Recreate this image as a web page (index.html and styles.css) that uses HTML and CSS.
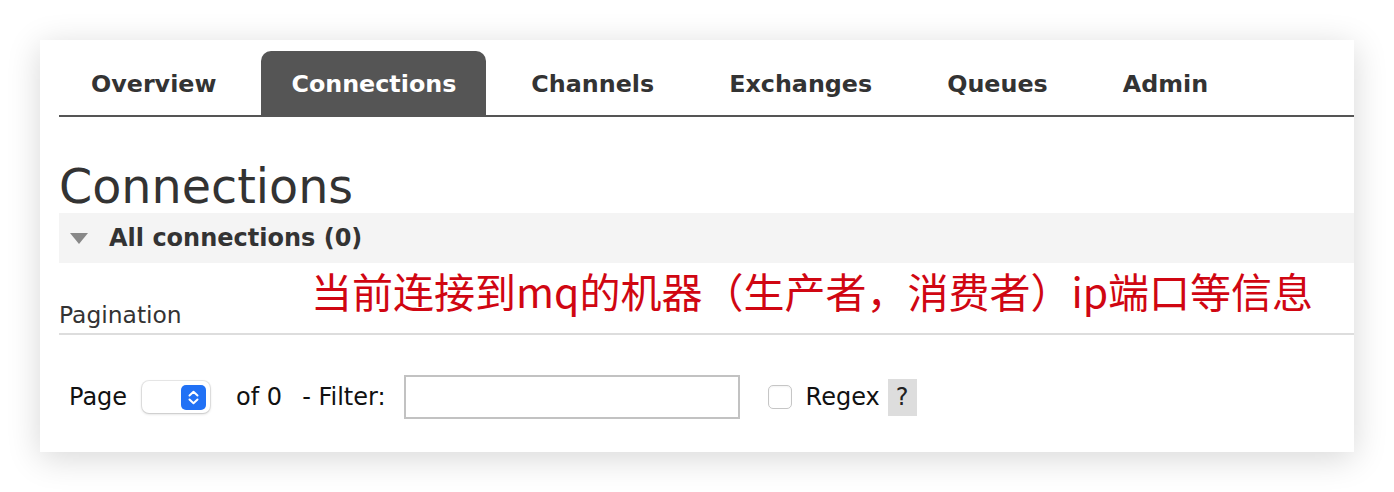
FILE: index.html
```html
<!DOCTYPE html>
<html lang="en">
<head>
<meta charset="utf-8">
<title>Connections</title>
<link rel="stylesheet" href="styles.css">
</head>
<body>
<div class="card">
  <ul class="tabs">
    <li class="tab">Overview</li>
    <li class="tab active">Connections</li>
    <li class="tab">Channels</li>
    <li class="tab">Exchanges</li>
    <li class="tab">Queues</li>
    <li class="tab">Admin</li>
  </ul>
  <h1 class="page-title">Connections</h1>
  <div class="section-bar">
    <span class="tri"></span>
    <h2 class="section-title">All connections (0)</h2>
  </div>
  <div class="pagination-head">
    <h3 class="pagination-title">Pagination</h3>
    <p class="note">当前连接到mq的机器（生产者，消费者）ip端口等信息</p>
  </div>
  <div class="controls">
    <span class="lbl lbl-page">Page</span>
    <span class="select">
      <span class="select-btn">
        <svg width="25" height="25" viewBox="0 0 25 25"><path d="M8.5 10.5 L12.5 6.8 L16.5 10.5" fill="none" stroke="#fff" stroke-width="2" stroke-linecap="round" stroke-linejoin="round"/><path d="M8.5 14.5 L12.5 18.2 L16.5 14.5" fill="none" stroke="#fff" stroke-width="2" stroke-linecap="round" stroke-linejoin="round"/></svg>
      </span>
    </span>
    <span class="lbl lbl-of">of 0</span>
    <span class="lbl lbl-filter">- Filter:</span>
    <span class="filter-input"></span>
    <span class="checkbox"></span>
    <span class="lbl lbl-regex">Regex</span>
    <span class="help">?</span>
  </div>
</div>
</body>
</html>
```

FILE: styles.css
```css
html, body {
  margin: 0;
  padding: 0;
  background: #fff;
}
body {
  padding: 40px;
  font-family: "DejaVu Sans", "Noto Sans CJK SC", sans-serif;
  color: #333;
}
.card {
  background: #fff;
  height: 412px;
  box-sizing: border-box;
  padding: 11px 0 0 19px;
  box-shadow: 0 6px 32px rgba(0, 0, 0, 0.16);
}
.tabs {
  list-style: none;
  margin: 0;
  padding: 0 0 0 2px;
  display: flex;
  gap: 15px;
  border-bottom: 2px solid #555;
}
.tab {
  height: 62px;
  line-height: 62px;
  padding: 2px 30px 0;
  font-weight: bold;
  font-size: 23.8px;
  color: #333;
  border-radius: 10px 10px 0 0;
}
.tab.active {
  background: #555;
  color: #fff;
}
.page-title {
  margin: 44px 0 0;
  font-size: 47.6px;
  line-height: 52px;
  font-weight: normal;
  color: #333;
}
.section-bar {
  height: 50px;
  background: #f4f4f4;
  display: flex;
  align-items: center;
  padding-left: 11px;
}
.tri {
  width: 0;
  height: 0;
  border-left: 9px solid transparent;
  border-right: 9px solid transparent;
  border-top: 11px solid #888;
  margin-right: 21px;
}
.section-title {
  margin: 0;
  font-size: 24px;
  font-weight: bold;
  color: #333;
}
.pagination-head {
  position: relative;
  height: 72px;
  box-sizing: border-box;
  display: flex;
  align-items: flex-end;
  padding-bottom: 4px;
  border-bottom: 2px solid #ddd;
}
.pagination-title {
  margin: 0;
  font-size: 23.4px;
  line-height: 28px;
  font-weight: normal;
  color: #333;
}
.note {
  position: absolute;
  left: 252px;
  top: 3px;
  margin: 0;
  font-family: "Noto Sans CJK SC", sans-serif;
  font-size: 41px;
  line-height: 48px;
  color: #d00612;
  white-space: nowrap;
}
.controls {
  display: flex;
  align-items: center;
  height: 44px;
  margin-top: 40px;
  padding-left: 10px;
  font-size: 24px;
  color: #111;
}
.lbl {
  white-space: nowrap;
}
.select {
  margin-left: 15px;
  width: 68px;
  height: 32px;
  box-sizing: border-box;
  border-radius: 7px;
  background: #fff;
  box-shadow: 0 0 0 1px rgba(0, 0, 0, 0.08), 0 1px 3px rgba(0, 0, 0, 0.18);
  display: flex;
  align-items: center;
  justify-content: flex-end;
  padding-right: 4px;
}
.select-btn {
  width: 25px;
  height: 25px;
  border-radius: 5px;
  background: #2171f5;
  display: flex;
}
.lbl-of {
  margin-left: 26px;
}
.lbl-filter {
  margin-left: 20px;
}
.filter-input {
  margin-left: 18px;
  width: 336px;
  height: 44px;
  box-sizing: border-box;
  border: 2px solid #c2c2c2;
  background: #fff;
}
.checkbox {
  margin-left: 28px;
  width: 24px;
  height: 24px;
  box-sizing: border-box;
  border: 1px solid #c6c6c6;
  border-radius: 5px;
  background: #fff;
  box-shadow: inset 0 1px 2px rgba(0, 0, 0, 0.05);
}
.lbl-regex {
  margin-left: 14px;
}
.help {
  margin-left: 8px;
  width: 29px;
  height: 37px;
  background: #ddd;
  display: flex;
  align-items: center;
  justify-content: center;
  color: #222;
}
```
